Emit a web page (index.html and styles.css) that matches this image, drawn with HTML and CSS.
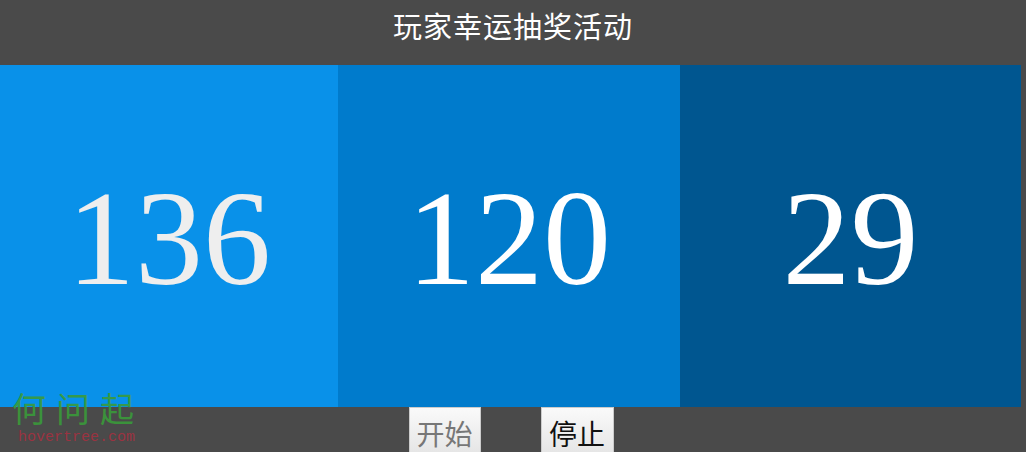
FILE: index.html
```html
<!DOCTYPE html>
<html lang="zh-CN">
  <head>
    <meta charset="UTF-8" />
    <meta name="viewport" content="width=device-width, initial-scale=1.0" />
    <title>玩家幸运抽奖活动</title>
    <link rel="stylesheet" href="styles.css">
  </head>
  <body>
    <div class="header">
      <h1>玩家幸运抽奖活动</h1>
    </div>

    <div class="board">
      <div class="cell cell-1"><span class="num num-dim" id="num1">136</span></div>
      <div class="cell cell-2"><span class="num" id="num2">120</span></div>
      <div class="cell cell-3"><span class="num" id="num3">29</span></div>
    </div>

    <div class="footer">
      <button class="btn btn-start" id="startBtn">开始</button>
      <button class="btn btn-stop" id="stopBtn">停止</button>
    </div>

    <div class="logo">
      <div class="logo-cn">何问起</div>
      <div class="logo-en">hovertree.com</div>
    </div>
  </body>
</html>
```

FILE: styles.css
```css
* {
  margin: 0;
  padding: 0;
  box-sizing: border-box;
}
html,
body {
  width: 100%;
  height: 100%;
  overflow: hidden;
}
body {
  background-color: #4a4a4a;
  font-family: "Noto Sans CJK SC", sans-serif;
  position: relative;
}
.header {
  height: 65px;
  display: flex;
  justify-content: center;
  align-items: center;
}
.header h1 {
  color: #fff;
  font-size: 29px;
  font-weight: normal;
  letter-spacing: 1px;
  margin-top: -16px;
}
.board {
  display: grid;
  grid-template-columns: 338px 342px 341px;
  height: 342px;
}
.cell {
  display: flex;
  justify-content: center;
  align-items: center;
}
.cell-1 {
  background-color: #0991e9;
}
.cell-2 {
  background-color: #007bcc;
}
.cell-3 {
  background-color: #005690;
}
.num {
  font-family: "Liberation Serif", serif;
  font-size: 136px;
  color: #fff;
  line-height: 1;
  margin-top: 4px;
}
.num-dim {
  color: #eee;
}
.footer {
  height: 45px;
  display: flex;
  justify-content: center;
  align-items: flex-start;
  gap: 60px;
  padding-right: 4px;
}
.btn {
  width: 72px;
  height: 50px;
  font-family: "Noto Sans CJK SC", sans-serif;
  font-size: 28px;
  border: 1px solid #ccc;
  background: linear-gradient(#fafafa, #e4e4e4);
  padding-top: 2px;
  line-height: 1.3;
  cursor: pointer;
}
.btn-start {
  color: #777;
}
.btn-stop {
  color: #111;
  width: 73px;
}
.logo {
  position: absolute;
  left: 12px;
  top: 386px;
}
.logo-cn {
  color: #3a9a3a;
  font-size: 34px;
  letter-spacing: 10px;
  line-height: 44px;
  opacity: 0.9;
}
.logo-en {
  color: #a83040;
  font-family: "Liberation Mono", monospace;
  font-size: 15px;
  line-height: 15px;
  margin-left: 6px;
  opacity: 0.85;
}
```
